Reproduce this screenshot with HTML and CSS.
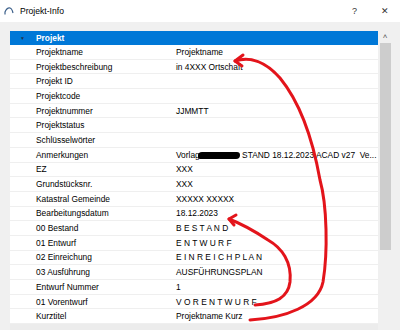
FILE: index.html
```html
<!DOCTYPE html>
<html lang="de">
<head>
  <meta charset="UTF-8">
  <title>Projekt-Info</title>
  <link rel="stylesheet" href="styles.css">
</head>
<body>
  <div class="titlebar">
    <svg class="app-icon" width="10" height="8" viewBox="0 0 10 8">
      <path d="M1 7.5 L1 5 Q3 0.5 6 1 Q8 1.5 9 6" fill="none" stroke="#3b5f8a" stroke-width="1.2"/>
    </svg>
    <span class="title">Projekt-Info</span>
    <span class="help">?</span>
    <span class="close">&#x2715;</span>
  </div>

  <div class="content">
    <div class="table">
      <div class="group">
        <span class="caret">&#x25BC;</span>
        <span class="group-name">Projekt</span>
      </div>
      <div class="row"><span class="label">Projektname</span><span class="value">Projektname</span></div>
      <div class="row"><span class="label">Projektbeschreibung</span><span class="value">in 4XXX Ortschaft</span></div>
      <div class="row"><span class="label">Projekt ID</span><span class="value"></span></div>
      <div class="row"><span class="label">Projektcode</span><span class="value"></span></div>
      <div class="row"><span class="label">Projektnummer</span><span class="value">JJMMTT</span></div>
      <div class="row"><span class="label">Projektstatus</span><span class="value"></span></div>
      <div class="row"><span class="label">Schlüsselwörter</span><span class="value"></span></div>
      <div class="row"><span class="label">Anmerkungen</span><span class="value">Vorlag<span class="redacted"></span> STAND 18.12.2023 ACAD v27  Ve...</span></div>
      <div class="row"><span class="label">EZ</span><span class="value">XXX</span></div>
      <div class="row"><span class="label">Grundstücksnr.</span><span class="value">XXX</span></div>
      <div class="row"><span class="label">Katastral Gemeinde</span><span class="value">XXXXX XXXXX</span></div>
      <div class="row"><span class="label">Bearbeitungsdatum</span><span class="value">18.12.2023</span></div>
      <div class="row"><span class="label">00 Bestand</span><span class="value">B E S T A N D</span></div>
      <div class="row"><span class="label">01 Entwurf</span><span class="value">E N T W U R F</span></div>
      <div class="row"><span class="label">02 Einreichung</span><span class="value">E I N R E I C H P L A N</span></div>
      <div class="row"><span class="label">03 Ausführung</span><span class="value">AUSFÜHRUNGSPLAN</span></div>
      <div class="row"><span class="label">Entwurf Nummer</span><span class="value">1</span></div>
      <div class="row"><span class="label">01 Vorentwurf</span><span class="value">V O R E N T W U R F</span></div>
      <div class="row"><span class="label">Kurztitel</span><span class="value">Projektname Kurz</span></div>
      <div class="row row-muted"></div>
    </div>
    <div class="scrollbar">
      <span class="arrow-up">&#x2C4;</span>
      <div class="thumb"></div>
    </div>
  </div>

  <svg class="marks" width="400" height="330" viewBox="0 0 400 330">
    <g fill="none" stroke="#e3141b" stroke-width="3" stroke-linecap="round" stroke-linejoin="round">
      <path d="M250 320 C285 318 318 306 323 282 C328 252 327 205 320 180 C312 135 298 100 280 78 C266 62 250 56 235 61"/>
      <path d="M235 61 L243 55 M235 61 L242 66"/>
      <path d="M255 305 C275 304 288 298 290 282 C292 262 282 248 268 240 C256 232 242 224 229 219"/>
      <path d="M229 219 L236 215 M229 219 L234 225"/>
    </g>
  </svg>
</body>
</html>
```

FILE: styles.css
```css
* {
  margin: 0;
  padding: 0;
  box-sizing: border-box;
}

body {
  width: 400px;
  height: 330px;
  overflow: hidden;
  position: relative;
  background: #f0f0f0;
  font-family: 'Liberation Sans', Arial, sans-serif;
  font-size: 8.4px;
  color: #000;
}

.titlebar {
  height: 22px;
  background: #fff;
  display: flex;
  align-items: center;
  padding-left: 4px;
}

.app-icon {
  margin-right: 6px;
}

.title {
  font-size: 8.6px;
  color: #000;
  flex: 1;
}

.help {
  font-size: 9px;
  color: #333;
  margin-right: 24px;
}

.close {
  font-size: 9px;
  color: #333;
  margin-right: 11px;
}

.content {
  display: flex;
  padding: 9px 0 0 10px;
}

.table {
  width: 368px;
  background: #fff;
}

.group {
  height: 14px;
  background: #0078d7;
  color: #fff;
  display: flex;
  align-items: center;
}

.caret {
  width: 26px;
  padding-left: 10px;
  font-size: 5px;
  color: #1f3550;
}

.group-name {
  font-weight: bold;
}

.row {
  height: 14.7px;
  display: grid;
  grid-template-columns: 166px 1fr;
  align-items: center;
  border-bottom: 1px solid #efefef;
}

.row-muted {
  background: #ececec;
}

.label {
  padding-left: 26px;
}

.value {
  white-space: pre;
}

.redacted {
  display: inline-block;
  width: 42px;
  height: 7px;
  margin-left: -2px;
  vertical-align: -1px;
  background: #000;
  border-radius: 4px 3px 4px 2px;
}

.scrollbar {
  width: 12px;
  margin-left: 1px;
  display: flex;
  flex-direction: column;
  align-items: center;
}

.arrow-up {
  height: 12px;
  font-size: 8px;
  line-height: 12px;
  color: #555;
}

.thumb {
  width: 11px;
  height: 207px;
  background: #cdcdcd;
}

.marks {
  position: absolute;
  top: 0;
  left: 0;
}
```
